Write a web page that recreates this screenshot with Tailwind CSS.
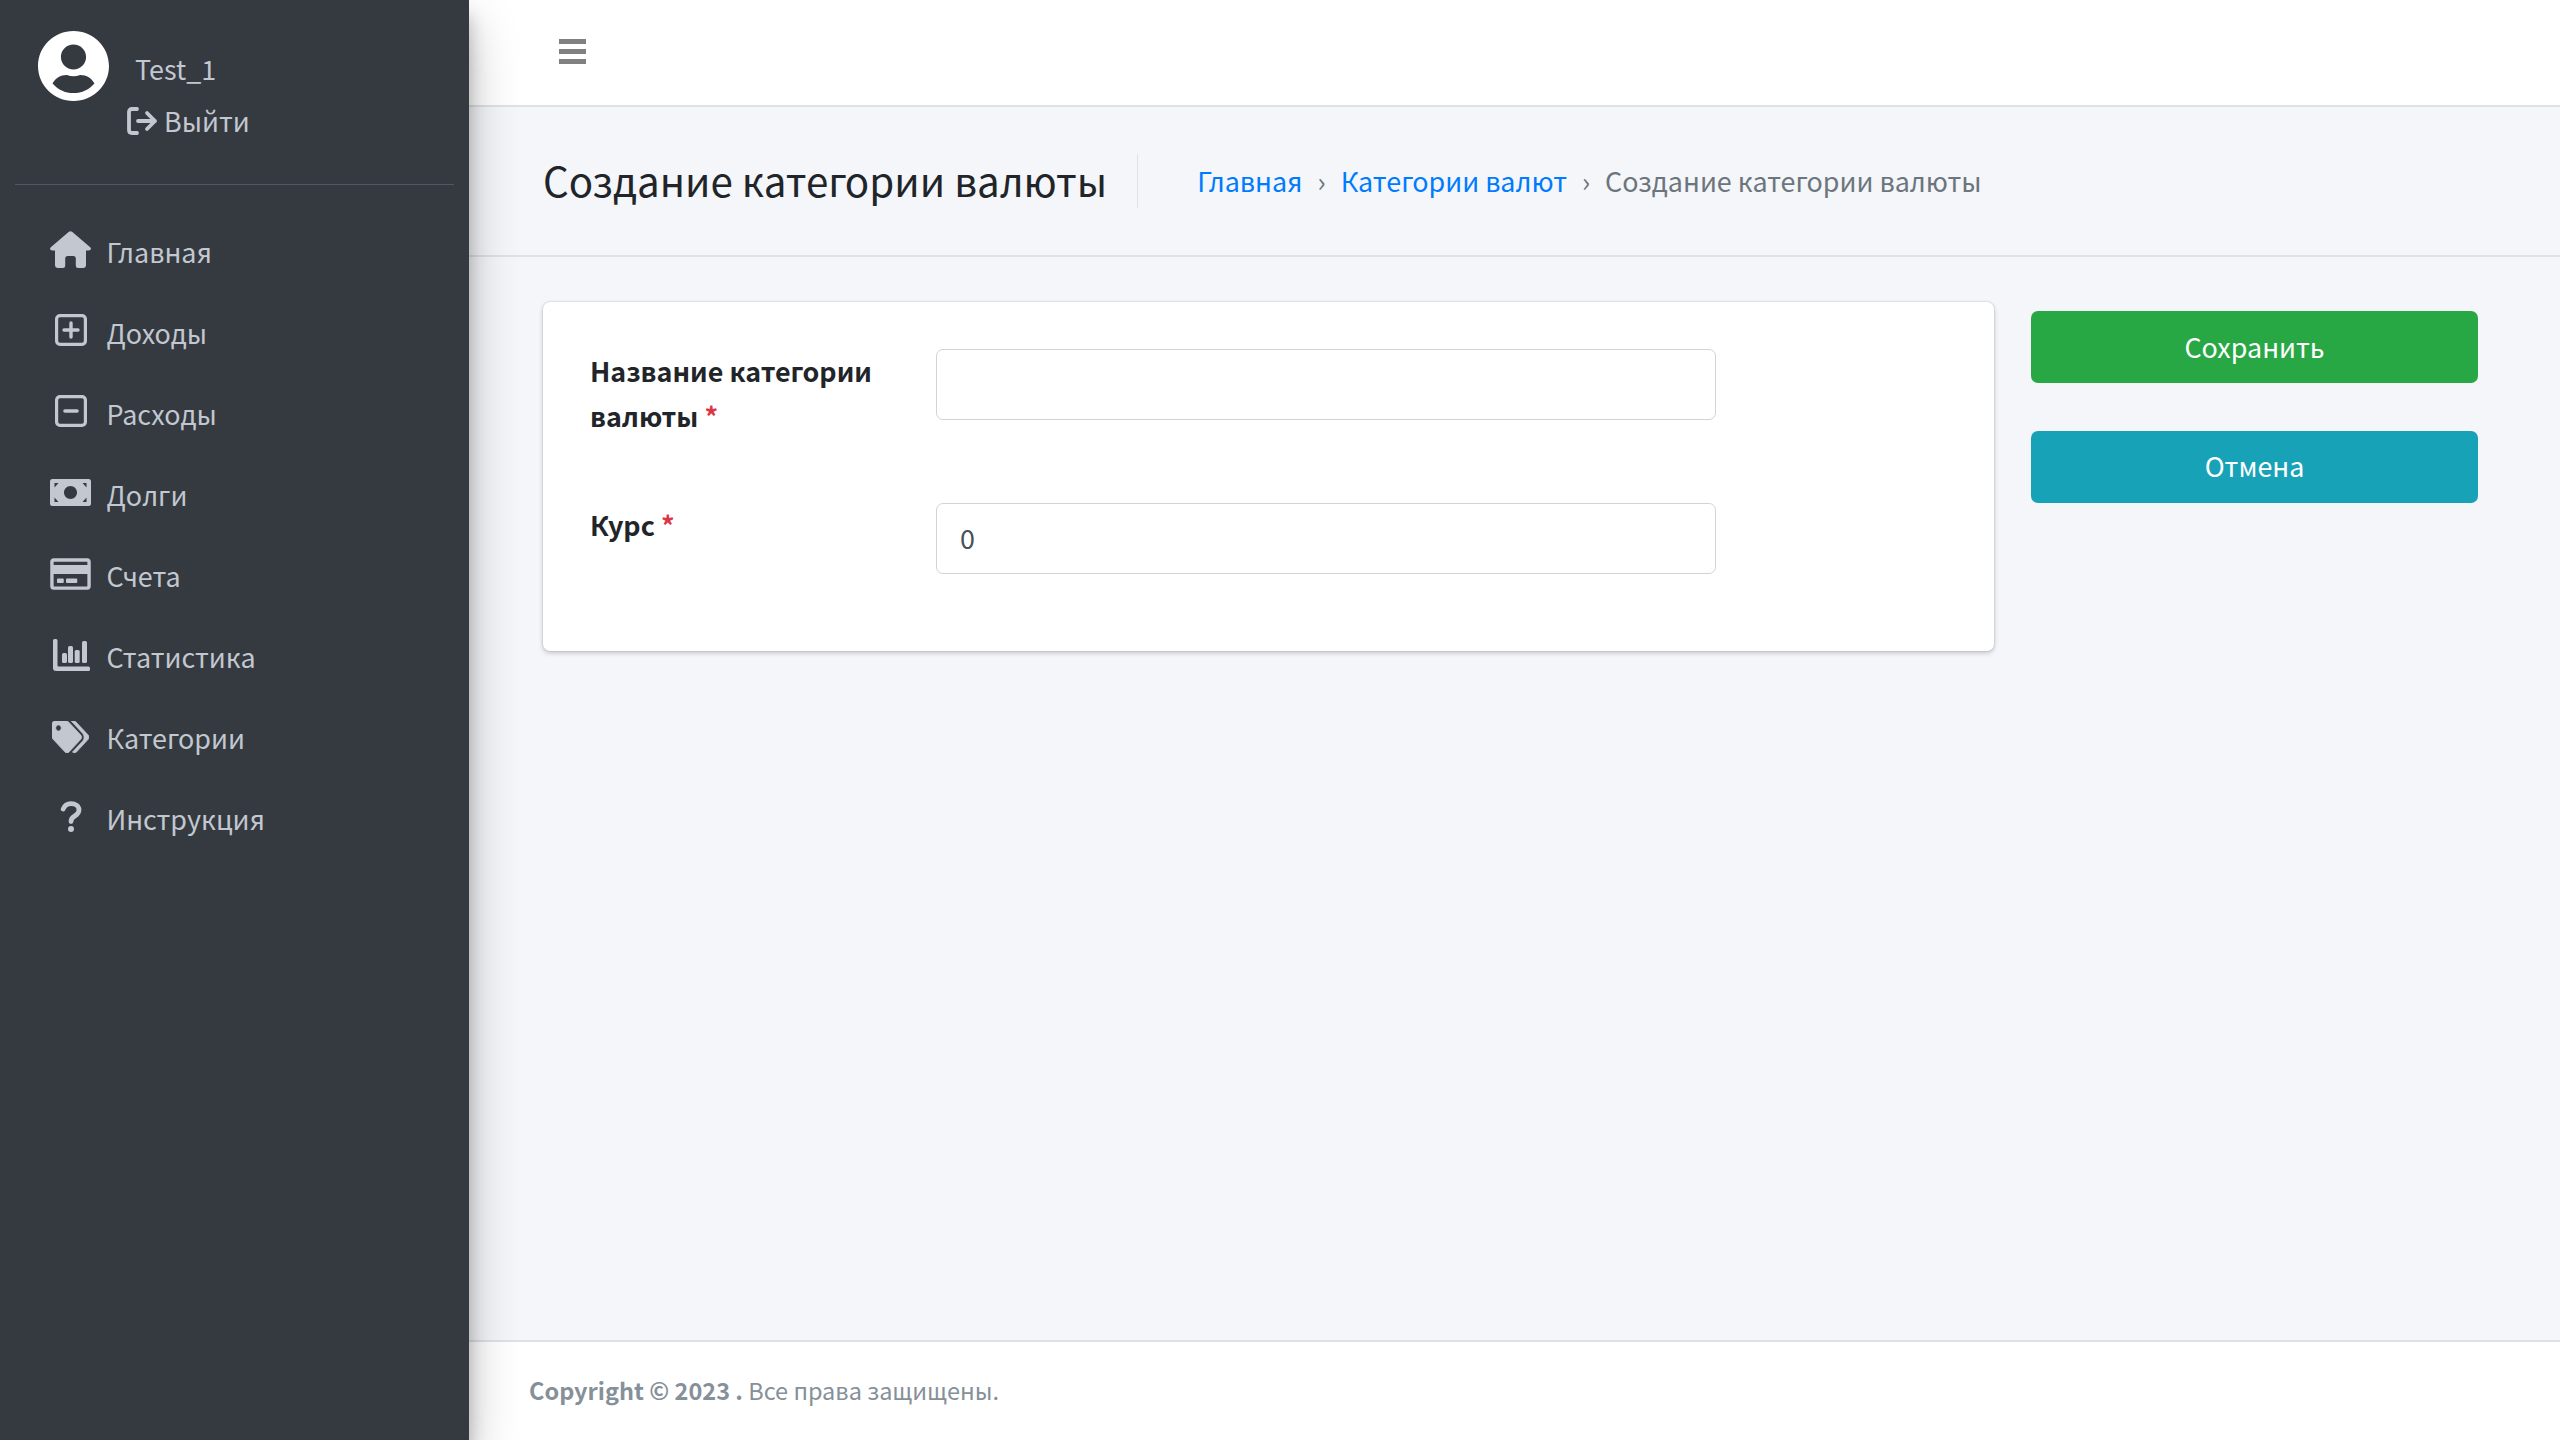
<!DOCTYPE html>
<html lang="ru">
<head>
<meta charset="utf-8">
<title>Создание категории валюты</title>
<script src="https://cdn.jsdelivr.net/npm/@tailwindcss/browser@4"></script>
</head>
<body class="bg-[#f4f6f9] font-['Noto_Sans_CJK_SC','Noto_Sans',sans-serif] text-[26.9px] text-[#212529]">
<div class="flex h-[1440px] w-[2560px] overflow-hidden">
  <aside class="relative z-10 flex w-[469px] shrink-0 flex-col bg-[#343a40] text-[#c2c7d0] shadow-[0_23px_46px_rgba(0,0,0,.25),0_16px_16px_rgba(0,0,0,.22)]">
    <div class="mx-[15px] h-[185px] border-b border-[#4f5962] pt-[31px] pl-[23px]">
      <div class="flex items-start">
        <svg class="h-[70px] w-[71px] shrink-0" viewBox="0 8 496 496" preserveAspectRatio="none" fill="#fff"><path d="M248 8C111 8 0 119 0 256s111 248 248 248 248-111 248-248S385 8 248 8zm0 96c48.6 0 88 39.4 88 88s-39.4 88-88 88-88-39.4-88-88 39.4-88 88-88zm0 344c-58.7 0-111.3-26.6-146.5-68.2 18.8-35.4 55.6-59.8 98.5-59.8 2.4 0 4.8.4 7.1 1.1 13 4.2 26.6 6.9 40.9 6.9 14.3 0 28-2.7 40.9-6.9 2.3-.7 4.7-1.1 7.1-1.1 42.9 0 79.7 24.4 98.5 59.8C359.3 421.4 306.7 448 248 448z"/></svg>
        <span class="ml-[26px] mt-[18px] leading-[40px]">Test_1</span>
      </div>
      <div class="ml-[89px] flex items-center gap-[6px] leading-[40px]">
        <svg class="h-[28px] w-[31px]" viewBox="0 0 31 28" fill="none" stroke="#c2c7d0" stroke-width="3.8" stroke-linecap="round" stroke-linejoin="round"><path d="M10 2H5Q2 2 2 5V23Q2 26 5 26H10"/><path d="M11 14H28M20 6L28 14L20 22"/></svg>
        <span>Выйти</span>
      </div>
    </div>
    <nav class="flex flex-col pt-[27px]">
      <a class="flex h-[81px] items-center pl-[50px]"><span class="flex w-[41px] justify-center"><svg class="mt-[-6px] h-[37px] w-[41px]" viewBox="0 0 41 37" fill="#c2c7d0"><path d="M18.9 .7Q20.5 -.4 22.1 .7L40.2 16.3Q41.6 17.6 40.4 18.8Q39.8 19.6 38.6 19.6H36V34Q36 37 33 37H28Q25.8 37 25.8 34.8V27.5Q25.8 25 23.3 25H17.7Q15.2 25 15.2 27.5V34.8Q15.2 37 13 37H8Q5 37 5 34V19.6H2.4Q1.2 19.6 .6 18.8Q-.6 17.6 .8 16.3Z"/></svg></span><span class="ml-[15.5px]">Главная</span></a>
      <a class="flex h-[81px] items-center pl-[50px]"><span class="flex w-[41px] justify-center"><svg class="mt-[-7px] h-[32px] w-[32px]" viewBox="0 0 32 32" fill="none" stroke="#c2c7d0" stroke-linecap="round"><rect x="1.6" y="1.6" width="28.8" height="28.8" rx="3.4" stroke-width="3.2"/><path d="M16 9V23M9 16H23" stroke-width="3.4"/></svg></span><span class="ml-[15.5px]">Доходы</span></a>
      <a class="flex h-[81px] items-center pl-[50px]"><span class="flex w-[41px] justify-center"><svg class="mt-[-7px] h-[32px] w-[32px]" viewBox="0 0 32 32" fill="none" stroke="#c2c7d0" stroke-linecap="round"><rect x="1.6" y="1.6" width="28.8" height="28.8" rx="3.4" stroke-width="3.2"/><path d="M10 16H22" stroke-width="3.6"/></svg></span><span class="ml-[15.5px]">Расходы</span></a>
      <a class="flex h-[81px] items-center pl-[50px]"><span class="flex w-[41px] justify-center"><svg class="mt-[-6px] h-[27px] w-[41px]" viewBox="0 0 41 27" fill="#c2c7d0"><path fill-rule="evenodd" d="M2.5 0H38.5Q41 0 41 2.5V24.5Q41 27 38.5 27H2.5Q0 27 0 24.5V2.5Q0 0 2.5 0ZM20.5 7C17 7 14 9.9 14 13.5S17 20 20.5 20S27 17.1 27 13.5S24 7 20.5 7ZM4.5 4V8.5L8.5 4ZM36.5 4H32.5L36.5 8.5ZM4.5 23H8.5L4.5 18.5ZM36.5 23V18.5L32.5 23Z"/></svg></span><span class="ml-[15.5px]">Долги</span></a>
      <a class="flex h-[81px] items-center pl-[50px]"><span class="flex w-[41px] justify-center"><svg class="mt-[-6px] h-[36px] w-[41px]" viewBox="0 0 576 512" fill="#c2c7d0"><path d="M527.9 32H48.1C21.5 32 0 53.5 0 80v352c0 26.5 21.5 48 48.1 48h479.8c26.6 0 48.1-21.5 48.1-48V80c0-26.5-21.5-48-48.1-48zM54.1 80h467.8c3.3 0 6 2.7 6 6v42H48.1V86c0-3.3 2.7-6 6-6zm467.8 352H54.1c-3.3 0-6-2.7-6-6V256h479.8v170c0 3.3-2.7 6-6 6zM192 332v40c0 6.6-5.4 12-12 12h-72c-6.6 0-12-5.4-12-12v-40c0-6.6 5.4-12 12-12h72c6.6 0 12 5.4 12 12zm192 0v40c0 6.6-5.4 12-12 12H236c-6.6 0-12-5.4-12-12v-40c0-6.6 5.4-12 12-12h136c6.6 0 12 5.4 12 12z"/></svg></span><span class="ml-[15.5px]">Счета</span></a>
      <a class="flex h-[81px] items-center pl-[50px]"><span class="flex w-[41px] justify-center"><svg class="ml-[2px] mt-[-6px] h-[32px] w-[37px]" viewBox="0 0 37 32" fill="#c2c7d0"><path d="M0 1.5Q0 0 1.5 0H3Q4.5 0 4.5 1.5V26.5Q4.5 27.5 5.5 27.5H35.5Q37 27.5 37 29V30.5Q37 32 35.5 32H3Q0 32 0 29Z"/><rect x="9" y="14" width="5" height="10" rx="1.6"/><rect x="15" y="7" width="5" height="17" rx="1.6"/><rect x="21.7" y="11" width="5" height="13" rx="1.6"/><rect x="29" y="2" width="5" height="22" rx="1.6"/></svg></span><span class="ml-[15.5px]">Статистика</span></a>
      <a class="flex h-[81px] items-center pl-[50px]"><span class="flex w-[41px] justify-center"><svg class="mt-[-3px] h-[32px] w-[37px]" viewBox="0 0 640 512" preserveAspectRatio="none" fill="#c2c7d0" stroke="#c2c7d0" stroke-width="12"><path d="M497.941 225.941L286.059 14.059A48 48 0 0 0 252.118 0H48C21.49 0 0 21.49 0 48v204.118a48 48 0 0 0 14.059 33.941l211.882 211.882c18.744 18.745 49.136 18.746 67.882 0l204.118-204.118c18.745-18.745 18.745-49.137 0-67.882zM112 160c-26.51 0-48-21.49-48-48s21.49-48 48-48 48 21.49 48 48-21.49 48-48 48zm513.941 133.823L421.823 497.941c-18.745 18.745-49.137 18.745-67.882 0l-.36-.36L527.64 323.522c16.999-16.999 26.36-39.6 26.36-63.64s-9.362-46.641-26.36-63.64L331.397 0h48.721a48 48 0 0 1 33.941 14.059l211.882 211.882c18.745 18.745 18.745 49.137 0 67.882z"/></svg></span><span class="ml-[15.5px]">Категории</span></a>
      <a class="flex h-[81px] items-center pl-[50px]"><span class="flex w-[41px] justify-center"><svg class="mt-[-6px] h-[31px] w-[22px]" viewBox="0 0 22 31" fill="none" stroke="#c2c7d0" stroke-width="4.8" stroke-linecap="round"><path d="M3.2 8C4.5 4.5 7 2.6 11 2.6C15.5 2.6 19 5.3 19 9C19 12.5 16.8 13.8 14.6 15.1C12 16.6 11 17.5 11 20.6"/><circle cx="11" cy="28" r="3" fill="#c2c7d0" stroke="none"/></svg></span><span class="ml-[15.5px]">Инструкция</span></a>
    </nav>
  </aside>
  <div class="flex min-w-0 flex-1 flex-col">
    <header class="flex h-[107px] shrink-0 items-center border-b-2 border-[#dee2e6] bg-white pl-[90px]">
      <div class="flex w-[27px] flex-col gap-[5px] mt-[-2px]"><span class="h-[5px] bg-[#808080]"></span><span class="h-[5px] bg-[#808080]"></span><span class="h-[5px] bg-[#808080]"></span></div>
    </header>
    <div class="flex h-[150px] shrink-0 items-center border-b-2 border-[#dee2e6] pl-[74px]">
      <h1 class="mt-[-2px] text-[40.3px] leading-[54px] text-[#212529]">Создание категории валюты</h1>
      <div class="ml-[30px] h-[54px] w-px bg-[#dee2e6]"></div>
      <div class="ml-[59px] flex items-center text-[#6c757d]"><a class="text-[#007bff]">Главная</a><span class="mx-[15px]">›</span><a class="text-[#007bff]">Категории валют</a><span class="mx-[15px]">›</span><span>Создание категории валюты</span></div>
    </div>
    <main class="flex flex-1 items-start pt-[45px] pl-[74px]">
      <form class="flex h-[349px] w-[1451px] flex-col rounded-[7px] bg-white pl-[47px] pt-[46px] shadow-[0_0_2px_rgba(0,0,0,.2),0_2px_5px_rgba(0,0,0,.2)]">
        <div class="flex h-[154px] items-start">
          <label class="w-[346px] font-bold leading-[45px]">Название категории валюты <span class="text-[#dc3545]">*</span></label>
          <input class="mt-[1px] h-[71px] w-[780px] rounded-[7px] border-[1.5px] border-[#ced4da] px-[23px] pb-[2px] text-[#495057]" type="text">
        </div>
        <div class="flex items-start">
          <label class="w-[346px] font-bold leading-[45px]">Курс <span class="text-[#dc3545]">*</span></label>
          <input class="mt-[1px] h-[71px] w-[780px] rounded-[7px] border-[1.5px] border-[#ced4da] px-[23px] pb-[2px] text-[#495057]" type="text" value="0">
        </div>
      </form>
      <div class="ml-[37px] flex w-[447px] flex-col gap-[48px] pt-[9px] text-white">
        <button class="h-[72px] rounded-[7px] bg-[#28a745]">Сохранить</button>
        <button class="h-[72px] rounded-[7px] bg-[#17a2b8] pb-[1px]">Отмена</button>
      </div>
    </main>
    <footer class="flex h-[100px] shrink-0 items-center border-t-2 border-[#dee2e6] bg-white pl-[60px] text-[23.5px] text-[#869099]"><p><b>Copyright © 2023 .</b> Все права защищены.</p></footer>
  </div>
</div>
</body>
</html>
